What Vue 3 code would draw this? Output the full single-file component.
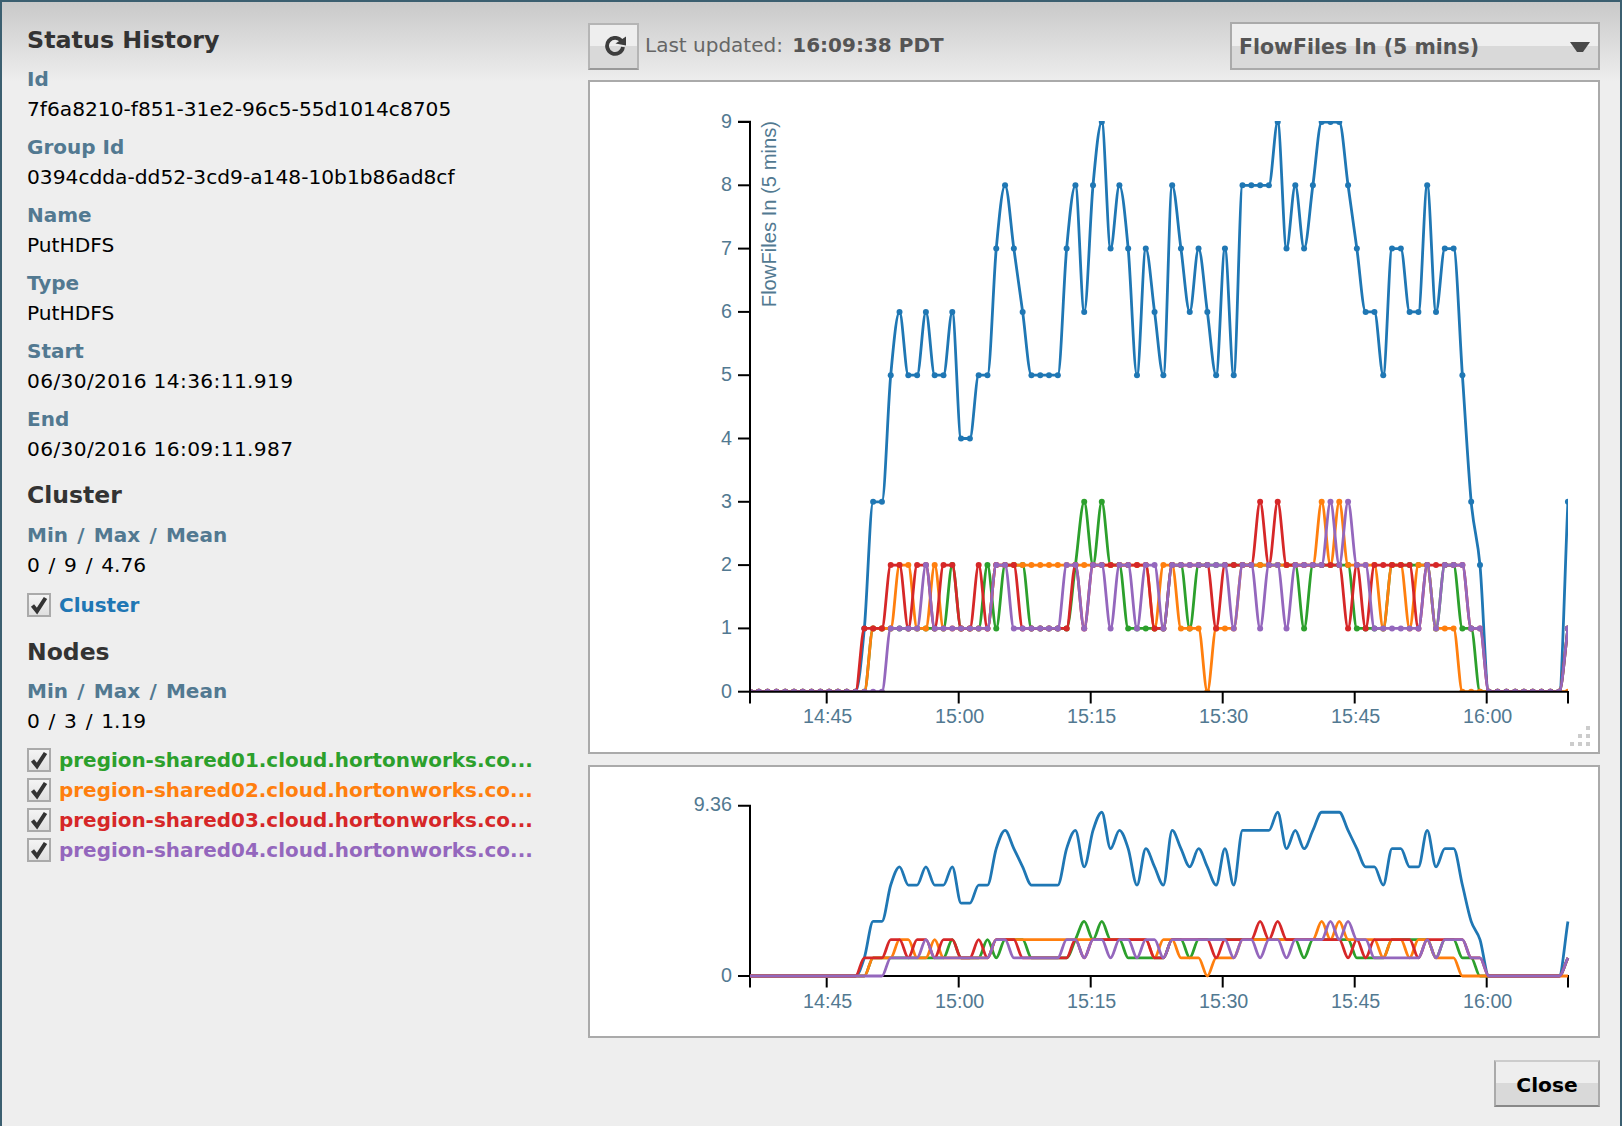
<script setup>
const zeros = (n) => Array(n).fill(0)
const blue = [...zeros(13),1,3,3,5,6,5,5,6,5,5,6,4,4,5,5,7,8,7,6,5,5,5,5,7,8,6,8,9,7,8,7,5,7,6,5,8,7,6,7,6,5,7,5,8,8,8,8,9,7,8,7,8,9,9,9,8,7,6,6,5,7,7,6,6,8,6,7,7,5,3,2,...zeros(9),3]
const green = [...zeros(14),1,1,1,1,1,1,1,1,1,2,1,1,1,2,1,2,2,2,1,1,1,1,1,2,3,2,3,2,2,1,1,1,1,1,2,2,1,2,2,2,2,2,2,2,2,2,2,2,2,1,2,2,2,2,2,1,1,1,1,2,2,2,2,2,1,2,2,1,1,...zeros(10),1]
const orange = [...zeros(14),1,1,1,2,2,1,1,2,1,1,1,1,1,1,2,2,2,2,2,2,2,2,2,2,2,2,2,2,2,2,2,2,1,2,2,1,1,1,0,1,1,1,2,2,2,2,2,2,2,2,2,3,2,3,2,2,2,2,1,2,2,1,2,2,1,1,1,...zeros(13)]
const red = [...zeros(13),1,1,1,2,2,1,2,2,1,2,2,1,1,2,1,2,2,2,1,1,1,1,1,1,2,1,2,2,2,2,2,2,2,1,1,2,2,2,2,2,1,2,2,2,2,3,2,3,2,2,2,2,2,2,2,1,2,1,2,2,2,2,2,1,2,2,2,2,2,1,1,...zeros(9),1]
const purple = [...zeros(16),1,1,1,1,2,1,1,1,1,1,1,1,2,2,1,1,1,1,1,1,2,2,1,2,2,1,2,2,1,2,2,1,2,2,2,2,2,2,2,1,2,2,1,2,2,1,2,2,2,2,3,2,3,2,2,1,1,1,1,1,1,2,1,2,2,2,1,1,...zeros(9),1]

const colors = ['#1f77b4', '#2ca02c', '#ff7f0e', '#d62728', '#9467bd']
const all = [blue, green, orange, red, purple]
const xAt = (i) => 750 + 8.795 * i

function monotone(pts) {
  const n = pts.length
  const d = []
  for (let i = 0; i < n - 1; i++) d.push((pts[i + 1][1] - pts[i][1]) / (pts[i + 1][0] - pts[i][0]))
  const m = [d[0]]
  for (let i = 1; i < n - 1; i++) m.push(d[i - 1] * d[i] <= 0 ? 0 : (d[i - 1] + d[i]) / 2)
  m.push(d[n - 2])
  for (let i = 0; i < n - 1; i++) {
    if (d[i] === 0) { m[i] = 0; m[i + 1] = 0; continue }
    const a = m[i] / d[i]
    const b = m[i + 1] / d[i]
    const s = a * a + b * b
    if (s > 9) {
      const t = 3 / Math.sqrt(s)
      m[i] = t * a * d[i]
      m[i + 1] = t * b * d[i]
    }
  }
  let out = `M${pts[0][0].toFixed(2)},${pts[0][1].toFixed(2)}`
  for (let i = 0; i < n - 1; i++) {
    const h = (pts[i + 1][0] - pts[i][0]) / 3
    out += `C${(pts[i][0] + h).toFixed(2)},${(pts[i][1] + m[i] * h).toFixed(2)} ${(pts[i + 1][0] - h).toFixed(2)},${(pts[i + 1][1] - m[i + 1] * h).toFixed(2)} ${pts[i + 1][0].toFixed(2)},${pts[i + 1][1].toFixed(2)}`
  }
  return out
}

const mainY = (v) => 691.7 - v * 63.3
const miniY = (v) => 976 - v * (170.3 / 9.36)

const mainSeries = all.map((s, k) => {
  const pts = s.map((v, i) => [xAt(i), mainY(v)])
  return { color: colors[k], d: monotone(pts), pts }
})
const miniSeries = all.map((s, k) => ({
  color: colors[k],
  d: monotone(s.map((v, i) => [xAt(i), miniY(v)]))
}))

const xTicks = [
  { x: 826.7, label: '14:45' },
  { x: 958.7, label: '15:00' },
  { x: 1090.7, label: '15:15' },
  { x: 1222.7, label: '15:30' },
  { x: 1354.7, label: '15:45' },
  { x: 1486.7, label: '16:00' }
]
const yTicks = [0, 1, 2, 3, 4, 5, 6, 7, 8, 9]
const details = [
  { label: 'Id', value: '7f6a8210-f851-31e2-96c5-55d1014c8705' },
  { label: 'Group Id', value: '0394cdda-dd52-3cd9-a148-10b1b86ad8cf' },
  { label: 'Name', value: 'PutHDFS' },
  { label: 'Type', value: 'PutHDFS' },
  { label: 'Start', value: '06/30/2016 14:36:11.919', time: true },
  { label: 'End', value: '06/30/2016 16:09:11.987', time: true }
]
const nodes = [
  { name: 'pregion-shared01.cloud.hortonworks.co...', color: colors[1] },
  { name: 'pregion-shared02.cloud.hortonworks.co...', color: colors[2] },
  { name: 'pregion-shared03.cloud.hortonworks.co...', color: colors[3] },
  { name: 'pregion-shared04.cloud.hortonworks.co...', color: colors[4] }
]
const grip = [[1588, 728], [1580, 736], [1588, 736], [1572, 744], [1580, 744], [1588, 744]]
</script>

<template>
  <div class="dialog">
    <aside class="side">
      <h2 class="title">Status History</h2>
      <div v-for="d in details" :key="d.label" class="detail">
        <div class="label">{{ d.label }}</div>
        <div class="value" :class="{ time: d.time }">{{ d.value }}</div>
      </div>

      <h3 class="group">Cluster</h3>
      <div class="detail stat">
        <div class="label">Min / Max / Mean</div>
        <div class="value">0 / 9 / 4.76</div>
      </div>
      <div class="check-row">
        <span class="check">
          <svg viewBox="0 0 20 20" width="20" height="20"><path d="M3.5 10.5l4.5 5.5L16.5 3" fill="none" stroke="#333" stroke-width="4"/></svg>
        </span>
        <span class="check-name cluster">Cluster</span>
      </div>

      <h3 class="group nodes">Nodes</h3>
      <div class="detail stat">
        <div class="label">Min / Max / Mean</div>
        <div class="value">0 / 3 / 1.19</div>
      </div>
      <div class="node-list">
        <div v-for="n in nodes" :key="n.name" class="check-row">
          <span class="check">
            <svg viewBox="0 0 20 20" width="20" height="20"><path d="M3.5 10.5l4.5 5.5L16.5 3" fill="none" stroke="#333" stroke-width="4"/></svg>
          </span>
          <span class="check-name" :style="{ color: n.color }">{{ n.name }}</span>
        </div>
      </div>
    </aside>

    <main class="content">
      <div class="toolbar">
        <button class="refresh" type="button" aria-label="Refresh">
          <svg viewBox="0 0 24 20" width="24" height="20">
            <path d="M18.6 5.2A8 8 0 1 0 20 11" fill="none" stroke="#3d3d3d" stroke-width="3.8"/>
            <path d="M12.5 7.5L23 0.5V9.5Z" fill="#3d3d3d"/>
          </svg>
        </button>
        <div class="updated">Last updated: <b>16:09:38 PDT</b></div>
        <div class="select">
          <span>FlowFiles In (5 mins)</span>
          <svg viewBox="0 0 20 10" width="20" height="10"><path d="M0 0H20L13 10H7Z" fill="#484848"/></svg>
        </div>
      </div>

      <section class="panel main-panel">
        <svg class="chart" viewBox="590 82 1008 670" width="1008" height="670">
          <defs>
            <clipPath id="clipMain"><rect x="750" y="121" width="818" height="571"/></clipPath>
          </defs>
          <g clip-path="url(#clipMain)">
            <g v-for="s in mainSeries" :key="s.color">
              <path :d="s.d" fill="none" :stroke="s.color" stroke-width="2.8"/>
              <circle v-for="(p, i) in s.pts" :key="i" :cx="p[0]" :cy="p[1]" r="3" :fill="s.color"/>
            </g>
          </g>
          <path d="M738 121.7H750V691.7H1568" fill="none" stroke="#000" stroke-width="2"/>
          <g v-for="v in yTicks" :key="v">
            <line x1="738" x2="750" :y1="mainY(v)" :y2="mainY(v)" stroke="#000" stroke-width="2"/>
            <text class="tick" x="732" :y="mainY(v) + 6" text-anchor="end">{{ v }}</text>
          </g>
          <line x1="750" x2="750" y1="691" y2="703.5" stroke="#000" stroke-width="2"/>
          <line x1="1568" x2="1568" y1="691" y2="703.5" stroke="#000" stroke-width="2"/>
          <g v-for="t in xTicks" :key="t.label">
            <line :x1="t.x" :x2="t.x" y1="691" y2="703.5" stroke="#000" stroke-width="2"/>
            <text class="tick" :x="t.x + 1" y="723" text-anchor="middle">{{ t.label }}</text>
          </g>
          <text class="tick axis-title" text-anchor="end" transform="translate(776 121) rotate(-90)">FlowFiles In (5 mins)</text>
          <rect v-for="(g, i) in grip" :key="i" :x="g[0] - 2" :y="g[1] - 2" width="4" height="4" fill="#ccc"/>
        </svg>
      </section>

      <section class="panel mini-panel">
        <svg class="chart" viewBox="590 767 1008 269" width="1008" height="269">
          <path d="M738 805.7H750V976H1568" fill="none" stroke="#000" stroke-width="2"/>
          <line x1="738" x2="750" y1="976" y2="976" stroke="#000" stroke-width="2"/>
          <text class="tick" x="732" y="811" text-anchor="end">9.36</text>
          <text class="tick" x="732" y="982" text-anchor="end">0</text>
          <line x1="750" x2="750" y1="975" y2="987.5" stroke="#000" stroke-width="2"/>
          <line x1="1568" x2="1568" y1="975" y2="987.5" stroke="#000" stroke-width="2"/>
          <g v-for="t in xTicks" :key="t.label">
            <line :x1="t.x" :x2="t.x" y1="975" y2="987.5" stroke="#000" stroke-width="2"/>
            <text class="tick" :x="t.x + 1" y="1008" text-anchor="middle">{{ t.label }}</text>
          </g>
          <path v-for="s in miniSeries" :key="s.color" :d="s.d" fill="none" :stroke="s.color" stroke-width="2.8"/>
        </svg>
      </section>

      <div class="footer">
        <button class="close" type="button">Close</button>
      </div>
    </main>
  </div>
</template>

<style scoped>
.dialog {
  box-sizing: border-box;
  width: 1622px;
  height: 1126px;
  display: flex;
  border: solid #3b5f70;
  border-width: 2px 2px 0;
  background: linear-gradient(#c9c9c9 0, #eeeeee 80px, #eeeeee 100%);
  font-family: "DejaVu Sans", Verdana, sans-serif;
  overflow: hidden;
}
.side {
  box-sizing: border-box;
  width: 586px;
  padding: 22px 0 0 25px;
  font-size: 20.2px;
  color: #000;
}
.title {
  margin: 0;
  font-size: 23.8px;
  line-height: 32px;
  font-weight: 700;
  color: #333;
}
.detail {
  margin-top: 8px;
}
.title + .detail {
  margin-top: 8px;
}
.label {
  height: 30px;
  line-height: 30px;
  font-size: 20px;
  font-weight: 700;
  color: #527991;
}
.value {
  height: 30px;
  line-height: 30px;
}
.value.time {
  letter-spacing: 0.35px;
}
.group {
  margin: 15px 0 0;
  font-size: 23.5px;
  line-height: 32px;
  font-weight: 700;
  color: #333;
}
.group.nodes {
  margin-top: 16px;
}
.stat {
  margin-top: 9px;
  word-spacing: 2.3px;
}
.group.nodes + .stat {
  margin-top: 8px;
}
.check-row {
  display: flex;
  align-items: center;
  height: 30px;
}
.stat + .check-row {
  margin-top: 10px;
}
.node-list {
  margin-top: 9px;
}
.check {
  box-sizing: border-box;
  width: 24px;
  height: 24px;
  display: flex;
  align-items: center;
  justify-content: center;
  border: 2px solid #aaa;
  background: linear-gradient(#f4f4f4, #e0e0e0);
  flex: none;
}
.check-name {
  margin-left: 8px;
  font-size: 19.95px;
  font-weight: 700;
  white-space: nowrap;
}
.cluster {
  color: #1f77b4;
}
.content {
  box-sizing: border-box;
  width: 1012px;
  padding-top: 20px;
  display: flex;
  flex-direction: column;
}
.toolbar {
  display: flex;
  align-items: center;
  height: 48px;
  margin-bottom: 10px;
}
.refresh {
  box-sizing: border-box;
  width: 51px;
  height: 47px;
  padding: 0 0 0 2px;
  display: flex;
  align-items: center;
  justify-content: center;
  border: 2px solid #b5b5b5;
  border-bottom-color: #999;
  background: linear-gradient(#eeeeee 50%, #d9d9d9 50%);
}
.updated {
  margin-left: 6px;
  flex: 1;
  font-size: 20px;
  color: #666;
  padding-bottom: 3px;
}
.updated b {
  margin-left: 3px;
  color: #555;
}
.select {
  box-sizing: border-box;
  width: 370px;
  height: 48px;
  display: flex;
  align-items: center;
  justify-content: space-between;
  padding: 2px 8px 0 7px;
  border: 2px solid #aaa;
  background: linear-gradient(#eeeeee 50%, #d9d9d9 50%);
  font-size: 20.5px;
  font-weight: 700;
  color: #555;
}
.panel {
  box-sizing: border-box;
  border: 2px solid #aaa;
  background: #fff;
}
.main-panel {
  height: 674px;
}
.mini-panel {
  height: 273px;
  margin-top: 11px;
}
.chart {
  display: block;
}
.tick {
  font-family: "Liberation Sans", Arial, sans-serif;
  font-size: 19.7px;
  fill: #527991;
}
.axis-title {
  font-size: 20.2px;
}
.footer {
  display: flex;
  justify-content: flex-end;
  margin-top: 22px;
}
.close {
  box-sizing: border-box;
  width: 106px;
  height: 47px;
  padding: 3px 0 0;
  border: 2px solid #aaa;
  border-top-color: #ccc;
  border-bottom-color: #888;
  background: linear-gradient(#eeeeee 48%, #d9d9d9 48%);
  font-family: "DejaVu Sans", Verdana, sans-serif;
  font-size: 20.2px;
  font-weight: 700;
  color: #000;
}
</style>
